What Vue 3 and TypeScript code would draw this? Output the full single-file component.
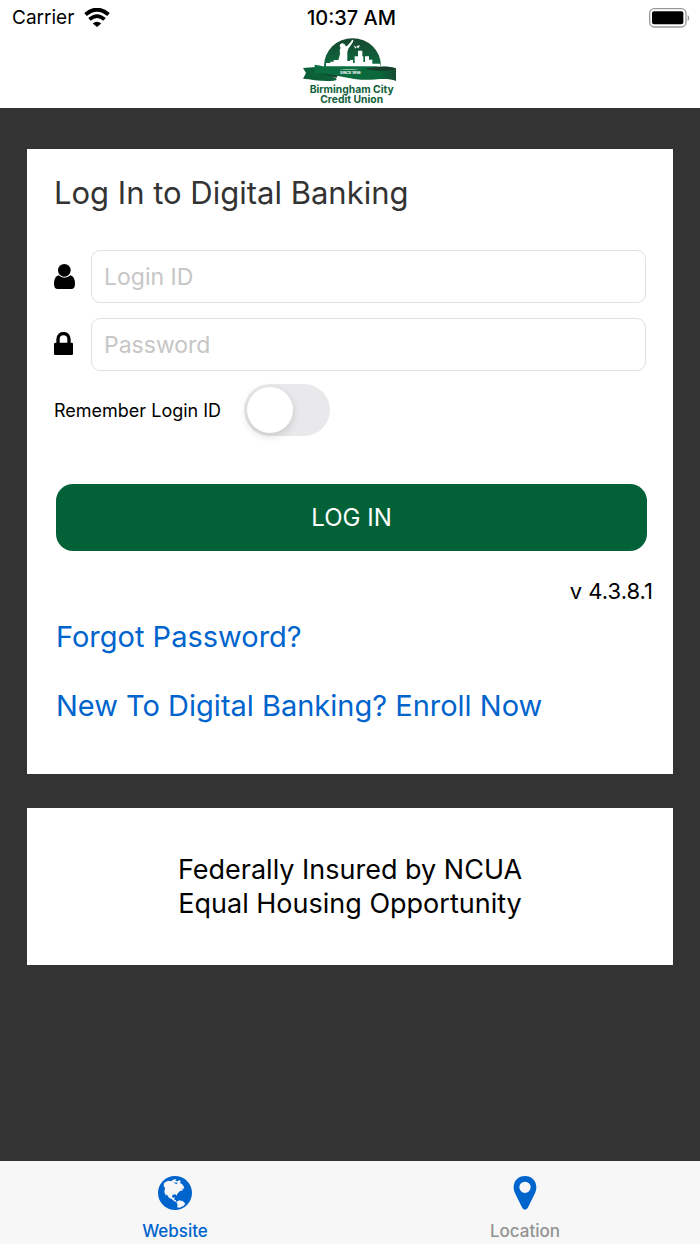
<script setup lang="ts">
import { ref } from 'vue'

const loginId = ref('')
const password = ref('')
const remember = ref(false)
</script>

<template>
  <div class="screen">
    <header class="top">
      <div class="status">
        <div class="carrier">
          <span>Carrier</span>
          <svg class="wifi" viewBox="0 0 78 58" role="img" aria-label="Wi-Fi">
            <path d="M4 20Q39-10 74 20" fill="none" stroke="#000" stroke-width="12" />
            <path d="M16 35Q39 15 62 35" fill="none" stroke="#000" stroke-width="11" />
            <path d="M26 47Q39 37 52 47L39 58Z" />
          </svg>
        </div>
        <time class="clock">10:37 AM</time>
        <div class="power">
          <svg class="battery" viewBox="0 0 126 60" role="img" aria-label="Battery full">
            <rect x="2" y="2" width="109" height="55" rx="14" fill="none" stroke="#999" stroke-width="4" />
            <rect x="9" y="10" width="94" height="39" rx="6" />
            <path d="M116 20Q126 30 116 40Z" fill="#999" />
          </svg>
        </div>
      </div>
      <svg class="logo" viewBox="36 112 288 204" role="img" aria-label="Birmingham City Credit Union">
        <defs>
          <linearGradient id="dome" x1="0" y1="0" x2="0" y2="1">
            <stop offset="0" stop-color="#17462f" />
            <stop offset="1" stop-color="#0b7041" />
          </linearGradient>
          <linearGradient id="band" x1="0" y1="0" x2="1" y2="0">
            <stop offset="0" stop-color="#0b7041" />
            <stop offset=".8" stop-color="#0a673b" />
            <stop offset="1" stop-color="#174b32" />
          </linearGradient>
        </defs>
        <path d="M102 198A85 82 0 0 1 273 198L230 208H102Z" fill="url(#dome)" />
        <path
          d="M108 200V190H121V186H131V181H145L150 163 149 151 152 145 149 139Q150 131 158 131 166 132 167 140L171 139 183 126 186 120 190 121 189 127 175 147 172 157 172 184H180V181H189V190H194V170H204V153H217V170H220V187H225V170H237V180H247V192H271V200Z"
          fill="#fff"
        />
        <path d="M191 137L198 142 203 138 210 137 205 146 200 142 196 147Z" fill="#fff" />
        <path d="M39 205L78 202 130 232Q150 241 130 243C100 247 66 239 39 237L48 220Z" fill="#0b6038" />
        <path d="M76 214L140 235Q137 224 170 222L100 205Z" fill="#173c2b" />
        <path
          d="M74 195C128 204 166 216 223 206 258 200 296 197 318 206V244C290 232 248 243 212 240 160 236 130 221 74 220Z"
          fill="url(#band)"
        />
        <path d="M226 207C256 201 290 197 317 207 290 216 260 215 226 207Z" fill="#183c2b" />
        <text x="181" y="224" class="since">SINCE 1956</text>
        <text x="185" y="279" class="name">Birmingham City</text>
        <text x="185" y="309" class="name">Credit Union</text>
      </svg>
    </header>

    <main class="content">
      <form class="card login" @submit.prevent>
        <h1>Log In to Digital Banking</h1>
        <div class="field">
          <label for="login-id" aria-label="Login ID">
            <svg class="user" viewBox="0 0 63 75" aria-hidden="true">
              <path d="M14 34Q21 41 31 41 42 41 49 34 63 38 63 60 63 75 52 75H11Q0 75 0 60 0 38 14 34Z" />
              <circle cx="31" cy="19" r="19" />
            </svg>
          </label>
          <input id="login-id" v-model="loginId" type="text" placeholder="Login ID" />
        </div>
        <div class="field">
          <label for="password" aria-label="Password">
            <svg class="lock" viewBox="0 0 57 69" aria-hidden="true">
              <path d="M12 34V22C12-1 45-1 45 22V34" fill="none" stroke="#000" stroke-width="10" />
              <rect y="32" width="57" height="37" rx="4" />
            </svg>
          </label>
          <input id="password" v-model="password" type="password" placeholder="Password" />
        </div>
        <div class="remember">
          <label for="remember">Remember Login ID</label>
          <input id="remember" v-model="remember" type="checkbox" role="switch" />
        </div>
        <button class="submit" type="submit">LOG IN</button>
        <p class="version">v 4.3.8.1</p>
        <a href="#forgot">Forgot Password?</a>
        <a href="#enroll">New To Digital Banking? Enroll Now</a>
      </form>

      <section class="card notice">
        <p>Federally Insured by NCUA</p>
        <p>Equal Housing Opportunity</p>
      </section>
    </main>

    <nav class="tabs">
      <a class="active" href="#website">
        <svg viewBox="0 0 102 102" aria-hidden="true">
          <circle cx="51" cy="51" r="51" fill="#0064cd" />
          <path
            d="M18 21L30 14 40 16 45 11 55 9 52 14 59 16 64 12 69 17 65 21 71 23 77 31 79 39 72 37 75 43 66 45 58 53 56 59 52 55 44 56 42 62 45 66 50 63 49 71 54 73 55 78 49 76 41 69 33 65 26 55 24 59 19 49 21 37 17 29Z"
            fill="#f7f7f7"
          />
          <path d="M55 78L64 73 75 76 82 83 76 90 65 95 57 94 59 86Z" fill="#f7f7f7" />
          <path d="M47 17L53 20 59 19 56 25 50 22Z" fill="#0064cd" />
        </svg>
        <span>Website</span>
      </a>
      <a href="#location">
        <svg viewBox="0 0 102 102" aria-hidden="true">
          <path
            d="M51 0C31 0 17 14 17 34 17 44 20 50 24 58L43 96Q51 107 59 96L78 58C82 50 85 44 85 34 85 14 71 0 51 0ZM51 17A17 17 0 1 1 51 51 17 17 0 1 1 51 17Z"
            fill="#0064cd"
            fill-rule="evenodd"
          />
        </svg>
        <span>Location</span>
      </a>
    </nav>
  </div>
</template>

<style>
body {
  margin: 0;
  background: #333;
}
</style>

<style scoped>
* {
  box-sizing: border-box;
}
.screen {
  display: flex;
  flex-direction: column;
  min-height: 100vh;
  background: #333;
  color: #000;
  font-family: Inter, "Liberation Sans", sans-serif;
}
.top {
  display: flex;
  flex-direction: column;
  align-items: center;
  padding-bottom: 3px;
  background: #fff;
}
.status {
  display: grid;
  grid-template-columns: 1fr auto 1fr;
  align-items: center;
  width: 100%;
  height: 37px;
  padding: 0 9px 2px 12px;
  font-size: 19px;
}
.carrier {
  display: flex;
  align-items: center;
  gap: 10px;
}
.wifi {
  width: 26px;
  height: 19px;
}
.clock {
  font-size: 20px;
  font-weight: 500;
}
.power {
  display: flex;
  justify-content: flex-end;
}
.battery {
  width: 42px;
  height: 20px;
}
.logo {
  width: 96px;
  height: 68px;
}
.since {
  fill: #fff;
  font-size: 11px;
  font-weight: 700;
  text-anchor: middle;
}
.name {
  fill: #12613a;
  font-size: 31px;
  font-weight: 700;
  text-anchor: middle;
}
.content {
  display: flex;
  flex: 1;
  flex-direction: column;
  gap: 34px;
  padding: 41px 27px;
}
.card {
  background: #fff;
}
.login {
  display: flex;
  flex-direction: column;
  padding: 24px 27px 48px;
}
h1 {
  margin: 0 0 37px;
  color: #333;
  font-size: 31px;
  font-weight: 400;
  line-height: 40px;
}
.field {
  display: flex;
  align-items: center;
  gap: 16px;
}
.field + .field {
  margin-top: 15px;
}
.field label {
  display: flex;
  flex: none;
  width: 21px;
}
.user {
  width: 21px;
  height: 25px;
}
.lock {
  width: 19px;
  height: 23px;
  margin-bottom: 3px;
}
.field input {
  flex: 1;
  min-width: 0;
  height: 53px;
  padding: 0 12px;
  border: 1px solid #e0e0e0;
  border-radius: 9px;
  background: #fff;
  color: #000;
  font: inherit;
  font-size: 23px;
}
.field input::placeholder {
  color: #c6c6c6;
  opacity: 1;
}
.remember {
  display: flex;
  align-items: center;
  gap: 23px;
  margin: 13px 0 48px;
  font-size: 18px;
}
.remember input {
  display: flex;
  align-items: center;
  appearance: none;
  width: 86px;
  height: 52px;
  margin: 0;
  padding: 3px;
  border-radius: 26px;
  background: #e9e9eb;
}
.remember input::before {
  content: "";
  width: 46px;
  height: 46px;
  border-radius: 50%;
  background: #fff;
  box-shadow: 0 3px 8px rgba(0, 0, 0, 0.15);
}
.remember input:checked {
  justify-content: flex-end;
  background: #036138;
}
.submit {
  height: 67px;
  margin: 0 -1px 0 2px;
  border: 0;
  border-radius: 17px;
  background: #036138;
  color: #fff;
  font: inherit;
  font-size: 24px;
}
.version {
  margin: 25px -7px 11px 0;
  font-size: 22px;
  line-height: 30px;
  text-align: right;
}
.login a {
  align-self: flex-start;
  margin: 0 2px 29px;
  color: #0064cd;
  font-size: 29px;
  line-height: 40px;
  text-decoration: none;
}
.login a:last-child {
  margin-bottom: 0;
}
.notice {
  padding: 45px 24px 44px;
  font-size: 27px;
  line-height: 34px;
  text-align: center;
}
.notice p {
  margin: 0;
}
.tabs {
  display: flex;
  background: #f7f7f7;
}
.tabs a {
  display: flex;
  flex: 1;
  flex-direction: column;
  align-items: center;
  gap: 11px;
  padding: 15px 0 3px;
  color: #929292;
  font-size: 17px;
  font-weight: 500;
  line-height: 20px;
  text-decoration: none;
}
.tabs a.active {
  color: #0064cd;
}
.tabs svg {
  width: 34px;
  height: 34px;
}
</style>
